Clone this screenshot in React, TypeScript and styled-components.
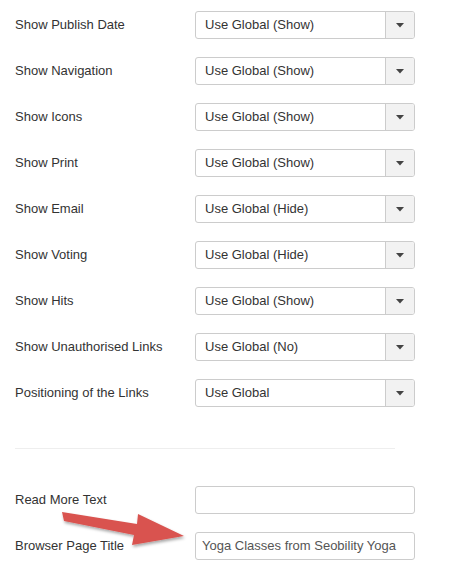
import React from 'react';
import styled, { createGlobalStyle } from 'styled-components';

const selectRows: { label: string; value: string }[] = [
  { label: 'Show Publish Date', value: 'Use Global (Show)' },
  { label: 'Show Navigation', value: 'Use Global (Show)' },
  { label: 'Show Icons', value: 'Use Global (Show)' },
  { label: 'Show Print', value: 'Use Global (Show)' },
  { label: 'Show Email', value: 'Use Global (Hide)' },
  { label: 'Show Voting', value: 'Use Global (Hide)' },
  { label: 'Show Hits', value: 'Use Global (Show)' },
  { label: 'Show Unauthorised Links', value: 'Use Global (No)' },
  { label: 'Positioning of the Links', value: 'Use Global' },
];

export default function App() {
  return (
    <Page>
      <GlobalStyle />
      <Form>
        {selectRows.map((row) => (
          <Row key={row.label}>
            <Label>{row.label}</Label>
            <Select>
              <SelectValue>{row.value}</SelectValue>
              <Caret>
                <svg width="8" height="5" viewBox="0 0 8 5">
                  <path d="M0 0 H8 L4 4.5 Z" fill="#444" />
                </svg>
              </Caret>
            </Select>
          </Row>
        ))}
      </Form>

      <Divider />

      <Form>
        <Row>
          <Label>Read More Text</Label>
          <TextInput />
        </Row>
        <Row>
          <Label>Browser Page Title</Label>
          <TextInput>Yoga Classes from Seobility Yoga</TextInput>
        </Row>
      </Form>

      <Arrow width="465" height="585" viewBox="0 0 465 585">
        <defs>
          <filter id="shadow" x="-20%" y="-50%" width="140%" height="200%">
            <feDropShadow dx="1" dy="2" stdDeviation="1.5" floodColor="#000" floodOpacity="0.35" />
          </filter>
        </defs>
        <polygon
          points="62,512 137,524 138,514 184,536 132,545 134,535 64,521"
          fill="#d9534f"
          filter="url(#shadow)"
        />
      </Arrow>
    </Page>
  );
}

const GlobalStyle = createGlobalStyle`
  body {
    margin: 0;
    background: #fff;
    font-family: "Liberation Sans", Arial, sans-serif;
    font-size: 13px;
    color: #333;
  }
`;

const Page = styled.div`
  position: relative;
  width: 465px;
  height: 585px;
  padding: 11px 0 0 15px;
  box-sizing: border-box;
  overflow: hidden;
`;

const Form = styled.div`
  display: flex;
  flex-direction: column;
  gap: 18px;
`;

const Row = styled.div`
  display: flex;
  align-items: center;
  height: 28px;
`;

const Label = styled.div`
  width: 180px;
  flex-shrink: 0;
  color: #333;
  font-size: 13px;
  line-height: 16px;
  margin-top: -1px;
`;

const Select = styled.div`
  display: flex;
  width: 220px;
  height: 28px;
  box-sizing: border-box;
  border: 1px solid #ccc;
  border-radius: 3px;
  overflow: hidden;
`;

const SelectValue = styled.div`
  flex: 1;
  display: flex;
  align-items: center;
  padding: 0 0 1px 9px;
  color: #333;
  font-size: 13px;
`;

const Caret = styled.div`
  width: 28px;
  display: flex;
  align-items: center;
  justify-content: center;
  background: #f2f2f2;
  border-left: 1px solid #ccc;
`;

const TextInput = styled.div`
  width: 220px;
  height: 28px;
  box-sizing: border-box;
  border: 1px solid #ccc;
  border-radius: 3px;
  display: flex;
  align-items: center;
  padding: 0 0 1px 6px;
  color: #555;
  font-size: 13px;
  white-space: nowrap;
  overflow: hidden;
`;

const Divider = styled.div`
  width: 380px;
  height: 1px;
  background: #eee;
  margin: 41px 0 37px;
`;

const Arrow = styled.svg`
  position: absolute;
  left: 0;
  top: 0;
  pointer-events: none;
`;
